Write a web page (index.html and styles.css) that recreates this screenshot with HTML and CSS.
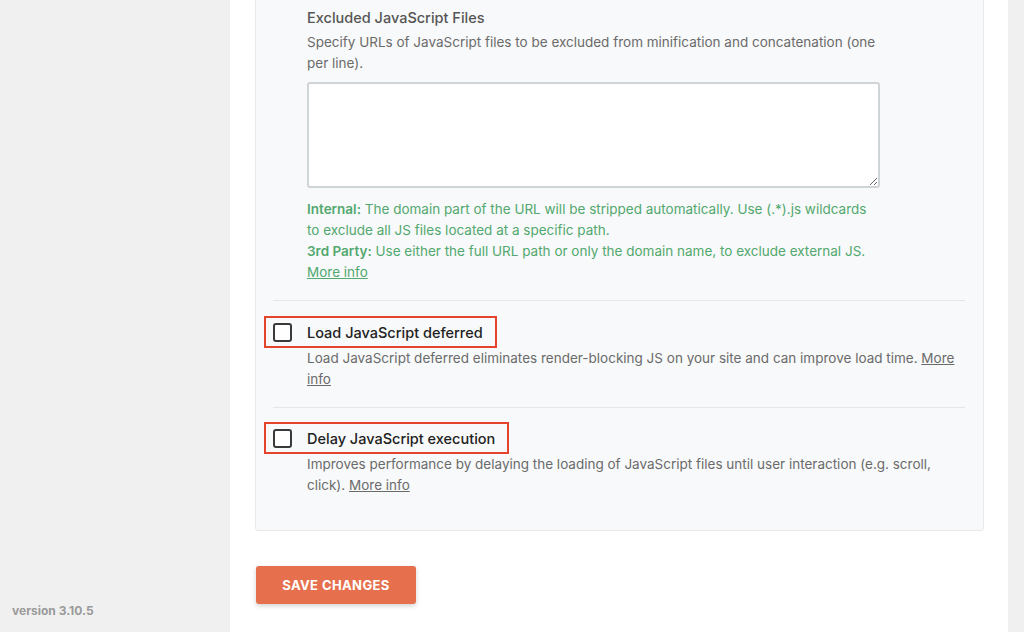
FILE: index.html
```html
<!DOCTYPE html>
<html>
<head>
<meta charset="utf-8">
<link rel="stylesheet" href="styles.css">
</head>
<body>
<div class="layout">
  <aside class="sidebar">
    <div class="version">version 3.10.5</div>
  </aside>
  <main class="main">
    <div class="card">
      <div class="section sub">
        <div class="title">Excluded JavaScript Files</div>
        <p class="desc">Specify URLs of JavaScript files to be excluded from minification and concatenation (one per line).</p>
        <textarea class="field"></textarea>
        <p class="hint"><b>Internal:</b> The domain part of the URL will be stripped automatically. Use (.*).js wildcards to exclude all JS files located at a specific path.<br><b>3rd Party:</b> Use either the full URL path or only the domain name, to exclude external JS. <a href="#">More info</a></p>
      </div>
      <div class="section">
        <label class="option"><span class="box"></span><span class="label">Load JavaScript deferred</span></label>
        <p class="desc opt">Load JavaScript deferred eliminates render-blocking JS on your site and can improve load time. <a href="#">More info</a></p>
      </div>
      <div class="section last">
        <label class="option"><span class="box"></span><span class="label">Delay JavaScript execution</span></label>
        <p class="desc opt">Improves performance by delaying the loading of JavaScript files until user interaction (e.g. scroll, click). <a href="#">More info</a></p>
      </div>
    </div>
    <button class="save">SAVE CHANGES</button>
  </main>
  <div class="edge"></div>
</div>
</body>
</html>
```

FILE: styles.css
```css
html, body {
  margin: 0;
  padding: 0;
  height: 100%;
  overflow: hidden;
}
body {
  font-family: Inter, "Noto Sans", sans-serif;
  color: #555;
}
.layout {
  display: flex;
  height: 632px;
}
.sidebar {
  width: 230px;
  flex: none;
  background: #f0f0f0;
  display: flex;
  flex-direction: column;
  justify-content: flex-end;
}
.version {
  padding: 0 0 13px 12px;
  font-size: 12px;
  font-weight: 700;
  color: #9a9a9a;
  line-height: 16px;
}
.main {
  flex: 1;
  background: #fff;
  padding-left: 25px;
}
.edge {
  width: 16px;
  flex: none;
  background: #f0f0f0;
}
.card {
  box-sizing: border-box;
  width: 729px;
  margin-top: -20px;
  background: #f8f9fa;
  border: 1px solid #e8eaec;
  border-radius: 3px;
  padding: 26px 18px 34px 17px;
}
.section {
  border-bottom: 1px solid #e4e6e8;
  padding-bottom: 17px;
  margin-bottom: 15px;
}
.section.last {
  border-bottom: none;
  margin-top: -1px;
  margin-bottom: 0;
  padding-bottom: 0;
}
.sub {
  padding-left: 34px;
}
.sub .desc, .sub .hint {
  width: 574px;
}
.title {
  font-size: 14.5px;
  font-weight: 500;
  color: #555;
  line-height: 21px;
}
.desc {
  margin: 4px 0 0;
  font-size: 13.5px;
  line-height: 21px;
  color: #6b6b6b;
}
.desc.opt {
  margin: 0 8px 0 34px;
}
.desc a, .hint a {
  color: inherit;
}
.field {
  display: block;
  box-sizing: border-box;
  width: 573px;
  height: 106px;
  margin-top: 8px;
  border: 2px solid #cfd4d6;
  border-radius: 3px;
  background: #fff;
  resize: vertical;
}
.hint {
  margin: 11px 0 0;
  font-size: 13.5px;
  line-height: 21px;
  color: #52a86e;
}
.hint b {
  font-weight: 600;
}
.option {
  display: inline-flex;
  align-items: center;
  gap: 15px;
  margin-left: -9px;
  padding: 3px 12px 3px 7px;
  border: 2px solid #e5432b;
  height: 32px;
  box-sizing: border-box;
}
.box {
  width: 19px;
  height: 19px;
  box-sizing: border-box;
  border: 2px solid #3a3a3a;
  border-radius: 3px;
  background: #fff;
}
.label {
  font-size: 14.5px;
  font-weight: 500;
  color: #222;
}
.save {
  display: block;
  margin-top: 35px;
  margin-left: 1px;
  width: 160px;
  height: 38px;
  border: none;
  border-radius: 3px;
  background: #e6704d;
  color: #fff;
  font-family: Inter, "Noto Sans", sans-serif;
  font-size: 13px;
  font-weight: 700;
  letter-spacing: 0.4px;
  box-shadow: 0 2px 5px rgba(0,0,0,0.18);
}
```
